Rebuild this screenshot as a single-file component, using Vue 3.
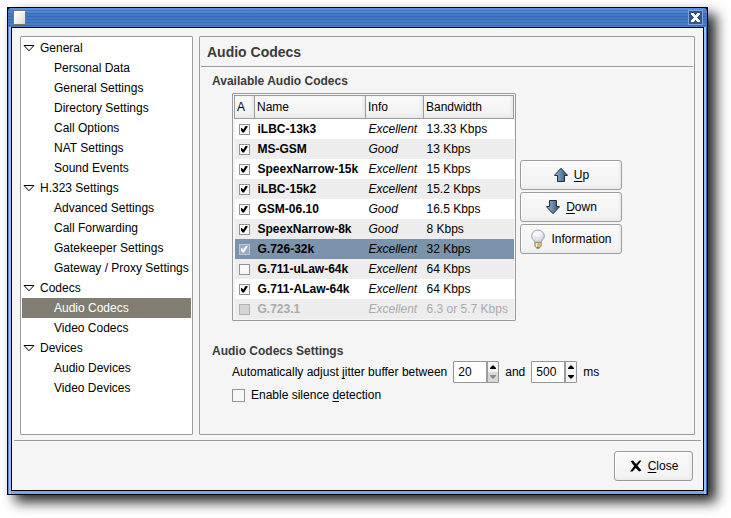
<script setup>
import { ref } from 'vue'

const tree = [
  { name: 'General', items: ['Personal Data', 'General Settings', 'Directory Settings', 'Call Options', 'NAT Settings', 'Sound Events'] },
  { name: 'H.323 Settings', items: ['Advanced Settings', 'Call Forwarding', 'Gatekeeper Settings', 'Gateway / Proxy Settings'] },
  { name: 'Codecs', items: ['Audio Codecs', 'Video Codecs'] },
  { name: 'Devices', items: ['Audio Devices', 'Video Devices'] },
]
const page = ref('Audio Codecs')
const selected = ref('G.726-32k')
const codecs = ref([
  { name: 'iLBC-13k3', info: 'Excellent', rate: '13.33 Kbps', on: true },
  { name: 'MS-GSM', info: 'Good', rate: '13 Kbps', on: true },
  { name: 'SpeexNarrow-15k', info: 'Excellent', rate: '15 Kbps', on: true },
  { name: 'iLBC-15k2', info: 'Excellent', rate: '15.2 Kbps', on: true },
  { name: 'GSM-06.10', info: 'Good', rate: '16.5 Kbps', on: true },
  { name: 'SpeexNarrow-8k', info: 'Good', rate: '8 Kbps', on: true },
  { name: 'G.726-32k', info: 'Excellent', rate: '32 Kbps', on: true },
  { name: 'G.711-uLaw-64k', info: 'Excellent', rate: '64 Kbps', on: false },
  { name: 'G.711-ALaw-64k', info: 'Excellent', rate: '64 Kbps', on: true },
  { name: 'G.723.1', info: 'Excellent', rate: '6.3 or 5.7 Kbps', on: false, off: true },
])
const minJitter = ref(20)
const maxJitter = ref(500)
const silence = ref(false)

function move(step) {
  const list = codecs.value
  const from = list.findIndex((c) => c.name === selected.value)
  const to = from + step
  if (to < 0 || to >= list.length) return
  list.splice(to, 0, list.splice(from, 1)[0])
}
</script>

<template>
  <div class="desktop">
    <div class="window">
      <header class="titlebar">
        <svg class="doc" width="13" height="15" viewBox="0 0 13 15" aria-hidden="true">
          <defs>
            <linearGradient id="paper" x1="0" y1="0" x2="1" y2="1">
              <stop offset="0" stop-color="#fff" />
              <stop offset=".5" stop-color="#f1f0ec" />
              <stop offset="1" stop-color="#d8d6cc" />
            </linearGradient>
          </defs>
          <path d="M.5 .5H11.500L12.500 1.500V14.500H.5Z" fill="url(#paper)" stroke="#77766e" />
          <path d="M1.500 13.500V1.500H11.500" fill="none" stroke="#fff" />
        </svg>
        <button class="shut" aria-label="Close window">
          <svg width="9" height="9" viewBox="0 0 9 9" aria-hidden="true">
            <path d="M0 0H3V1H4V2H5V1H6V0H9V2H8V3H7V4H6V5H7V6H8V7H9V9H6V8H5V7H4V8H3V9H0V7H1V6H2V5H3V4H2V3H1V2H0Z" fill="#fff" />
          </svg>
        </button>
      </header>

      <div class="body">
        <div class="panes">
          <nav class="tree">
            <template v-for="group in tree" :key="group.name">
              <a class="group" href="#">
                <svg width="12" height="7" viewBox="0 0 12 7" aria-hidden="true">
                  <path d="M1 .5H11L6 5.800Z" fill="#fff" stroke="#000" />
                </svg>
                <span>{{ group.name }}</span>
              </a>
              <a v-for="item in group.items" :key="item" class="leaf" :class="{ current: item === page }" href="#" @click.prevent="page = item">{{ item }}</a>
            </template>
          </nav>

          <main class="page">
            <h1>Audio Codecs</h1>
            <section>
              <h2>Available Audio Codecs</h2>
              <div class="codecs">
                <div class="frame">
                  <table>
                    <colgroup>
                      <col class="c-active" />
                      <col class="c-name" />
                      <col class="c-info" />
                      <col class="c-rate" />
                    </colgroup>
                    <thead>
                      <tr><th>A</th><th>Name</th><th>Info</th><th>Bandwidth</th></tr>
                    </thead>
                    <tbody>
                      <tr v-for="c in codecs" :key="c.name" :class="{ selected: c.name === selected, off: c.off }" @click="selected = c.name">
                        <td class="tick"><input v-model="c.on" type="checkbox" :disabled="c.off" :aria-label="c.name" /></td>
                        <td class="name">{{ c.name }}</td>
                        <td class="info">{{ c.info }}</td>
                        <td>{{ c.rate }}</td>
                      </tr>
                    </tbody>
                  </table>
                </div>
                <div class="actions">
                  <button class="btn" @click="move(-1)">
                    <svg width="16" height="16" viewBox="0 0 16 16" aria-hidden="true">
                      <defs>
                        <linearGradient id="steel">
                          <stop offset="0" stop-color="#9db9d2" />
                          <stop offset=".5" stop-color="#5f87aa" />
                          <stop offset="1" stop-color="#2f5274" />
                        </linearGradient>
                      </defs>
                      <path d="M8 1.300L14.300 8V8.500H11.500V14.500H4.500V8.500H1.700V8Z" fill="url(#steel)" stroke="#1d2c3a" />
                    </svg>
                    <span><u>U</u>p</span>
                  </button>
                  <button class="btn" @click="move(1)">
                    <svg width="16" height="16" viewBox="0 0 16 16" aria-hidden="true">
                      <path d="M8 14.700L14.300 8V7.500H11.500V1.500H4.500V7.500H1.700V8Z" fill="url(#steel)" stroke="#1d2c3a" />
                    </svg>
                    <span><u>D</u>own</span>
                  </button>
                  <button class="btn">
                    <svg width="16" height="20" viewBox="0 0 16 20" aria-hidden="true">
                      <defs>
                        <radialGradient id="glass" cx=".4" cy=".3" r=".7">
                          <stop offset="0" stop-color="#fff" />
                          <stop offset=".6" stop-color="#e9e9f6" />
                          <stop offset="1" stop-color="#bcbcce" />
                        </radialGradient>
                      </defs>
                      <path d="M8 1A6.300 6.300 0 0 0 1.600 7.300C1.600 10.300 4.600 11 4.900 13.500H11.100C11.400 11 14.400 10.300 14.400 7.300A6.300 6.300 0 0 0 8 1Z" fill="url(#glass)" stroke="#a3a3ad" />
                      <path d="M6 13L5.500 8L7 9L8 8L9 9L10.500 8L10 13" fill="none" stroke="#dedbd2" stroke-width=".7" />
                      <path d="M4.800 13.500H11.200V17L9.800 18.700H6.200L4.800 17Z" fill="#e3cd8c" stroke="#94845a" stroke-width=".8" />
                      <path d="M5.200 15.300H10.800M5.200 17H10.800" stroke="#b8a268" stroke-width=".6" />
                      <path d="M6.500 14V18" stroke="#f6ebc4" />
                      <path d="M6.500 19H9.500" stroke="#555" />
                    </svg>
                    <span>Information</span>
                  </button>
                </div>
              </div>
            </section>
            <section class="settings">
              <h2>Audio Codecs Settings</h2>
              <div class="jitter">
                <label for="jmin">Automatically adjust <u>j</u>itter buffer between</label>
                <div class="spin">
                  <input id="jmin" v-model.number="minJitter" type="text" />
                  <div class="steps">
                    <button aria-label="Increase minimum" @click="minJitter++"><svg width="6" height="4" viewBox="0 0 6 4"><path d="M0 4V3L3 0L6 3V4Z" /></svg></button>
                    <button aria-label="Decrease minimum" disabled><svg width="6" height="4" viewBox="0 0 6 4"><path d="M0 0V1L3 4L6 1V0Z" /></svg></button>
                  </div>
                </div>
                <label for="jmax">and</label>
                <div class="spin">
                  <input id="jmax" v-model.number="maxJitter" type="text" />
                  <div class="steps">
                    <button aria-label="Increase maximum" @click="maxJitter++"><svg width="6" height="4" viewBox="0 0 6 4"><path d="M0 4V3L3 0L6 3V4Z" /></svg></button>
                    <button aria-label="Decrease maximum" @click="maxJitter--"><svg width="6" height="4" viewBox="0 0 6 4"><path d="M0 0V1L3 4L6 1V0Z" /></svg></button>
                  </div>
                </div>
                <span>ms</span>
              </div>
              <label class="check"><input v-model="silence" type="checkbox" /><span>Enable silence <u>d</u>etection</span></label>
            </section>
          </main>
        </div>

        <footer class="foot">
          <button class="btn">
            <svg width="14" height="14" viewBox="0 0 14 14" aria-hidden="true">
              <path d="M1.500 2L4 1.500L7 5L10.500 1.500H12.500L8.500 6.800L12.500 11.500L10 12.500L6.800 9L3.500 12.500H1L5.200 7Z" fill="#000" />
            </svg>
            <span><u>C</u>lose</span>
          </button>
        </footer>
      </div>
    </div>
  </div>
</template>

<style>
body {
  background: #fff;
}
</style>

<style scoped>
* {
  box-sizing: border-box;
}
.desktop {
  display: flex;
  min-height: 100vh;
  padding: 7px 23px 23px 7px;
  font: 12px/20px "Liberation Sans", Arial, sans-serif;
  color: #000;
}
.window {
  flex: 1;
  display: flex;
  flex-direction: column;
  border: 1px solid #000;
  padding: 0 3px 3px;
  background: linear-gradient(#000, #000) 0 0 / 100% 4px no-repeat, linear-gradient(90deg, #5a8ed8 0 1px, #9fc0ee 1px 3px, #7ba6e4 3px calc(100% - 3px), #9fc0ee calc(100% - 3px) calc(100% - 1px), #3567ae calc(100% - 1px));
  box-shadow: 8px 7px 12px 0 rgba(0, 0, 0, 0.85);
}
.titlebar {
  display: flex;
  align-items: center;
  justify-content: space-between;
  height: 19px;
  margin: 0 -3px;
  padding: 0 4px 0 5px;
  border-radius: 3px 3px 0 0;
  background: repeating-linear-gradient(rgba(20, 50, 110, 0) 0 2px, rgba(20, 50, 110, 0.22) 2px 3px), linear-gradient(#5b93dc, #4078c4 40%, #4a7fc6);
}
.shut {
  display: flex;
  align-items: center;
  justify-content: center;
  width: 15px;
  height: 15px;
  padding: 0;
  border: 1px solid #7fa6dc;
  background: #35568c;
}
.body {
  flex: 1;
  display: flex;
  flex-direction: column;
  border: 1px solid #000;
  padding: 8px 2px 9px;
  background: #f5f5f5;
}
.panes {
  flex: 1;
  display: flex;
  gap: 6px;
  padding: 0 6px 5px;
}
.tree,
.page {
  border: 1px solid #9c9c9c;
  border-radius: 1px;
}
.tree {
  flex: 0 0 173px;
  padding: 1px;
  background: #fff;
}
.tree a {
  display: flex;
  align-items: center;
  gap: 5px;
  height: 20px;
  color: #000;
  text-decoration: none;
  white-space: nowrap;
}
.tree .group {
  padding-left: 1px;
}
.tree .leaf {
  padding-left: 32px;
}
.tree .current {
  background: #817d73;
  color: #fff;
}
.page {
  flex: 1;
  padding: 0 1px;
}
h1,
h2 {
  margin: 0;
  color: #3b3b3b;
}
h1 {
  height: 30px;
  padding-left: 6px;
  border-bottom: 1px solid #9c9c9c;
  font-size: 14px;
  line-height: 30px;
}
section {
  padding: 4px 11px 0;
}
h2 {
  font-size: 12px;
  line-height: 20px;
}
.codecs {
  display: flex;
  align-items: center;
  gap: 4px;
  padding: 2px 0 0 20px;
}
.frame {
  flex: 0 0 284px;
  border: 1px solid #9c9c9c;
  border-radius: 1px;
  padding: 1px;
  background: #f5f5f5;
}
table {
  width: 100%;
  border-collapse: collapse;
  table-layout: fixed;
}
.c-active {
  width: 20px;
}
.c-name {
  width: 111px;
}
.c-info {
  width: 58px;
}
th {
  height: 23px;
  padding: 0 2px;
  border: 1px solid #9c9c9c;
  background: linear-gradient(#fafafa, #f0f0f0);
  box-shadow: inset -2px -2px 3px #e8e8e8;
  font-weight: 400;
  text-align: left;
}
td {
  height: 20px;
  padding: 0 0 0 3px;
  line-height: 20px;
  white-space: nowrap;
}
td.tick {
  padding-left: 4px;
}
tbody tr {
  background: #fff;
}
tbody tr:nth-child(even) {
  background: #ededed;
}
tbody tr.selected {
  background: #7b94ac;
}
.name {
  font-weight: 700;
}
.info {
  font-style: italic;
}
.off {
  color: #ababab;
}
input[type="checkbox"] {
  appearance: none;
  display: block;
  width: 11px;
  height: 11px;
  margin: 0;
  border: 1px solid #949494;
  background: #f8f8f8;
}
input[type="checkbox"]:checked::after {
  content: "";
  display: block;
  width: 7px;
  height: 7px;
  margin: 1px;
  background: #000;
  clip-path: polygon(0 40%, 20% 36%, 38% 60%, 78% 0, 100% 0, 100% 20%, 50% 100%, 30% 100%, 0 60%);
}
.selected input[type="checkbox"] {
  border-color: #bac7dc;
  background: #9aaac4;
}
.selected input[type="checkbox"]:checked::after {
  background: #fff;
}
.off input[type="checkbox"] {
  border-color: #b0b0b0;
  background: #d4d4d4;
}
.actions {
  display: flex;
  flex-direction: column;
  gap: 2px;
  width: 102px;
}
.btn {
  display: flex;
  align-items: center;
  justify-content: center;
  gap: 5px;
  height: 30px;
  padding: 0;
  border: 1px solid #9c9c9c;
  border-radius: 3px;
  background: linear-gradient(#f9f9f9, #f2f2f2);
  box-shadow: inset -2px -2px 3px #ebebeb, inset 1px 1px 0 #fff;
  color: #000;
  font: inherit;
}
u {
  text-underline-offset: 2px;
}
.settings {
  padding-top: 20px;
}
.jitter {
  display: flex;
  align-items: center;
  gap: 6px;
  padding-left: 20px;
  white-space: nowrap;
}
.spin {
  display: flex;
  height: 22px;
  border: 1px solid #949494;
  border-radius: 1px;
}
.spin input {
  width: 32px;
  padding: 0 4px;
  border: 0;
  background: #fff;
  color: #000;
  font: inherit;
}
.steps {
  display: flex;
  flex-direction: column;
  width: 12px;
  border-left: 2px solid #9c9c9c;
}
.steps button {
  flex: 1;
  display: flex;
  align-items: center;
  justify-content: center;
  padding: 0;
  border: 0;
  background: #f5f5f5;
  color: #000;
}
.steps button:disabled {
  background: #d8d8d8;
  color: #888;
}
.steps path {
  fill: currentColor;
}
.check {
  display: flex;
  align-items: center;
  gap: 6px;
  margin-left: 20px;
  padding-top: 2px;
}
.check input[type="checkbox"] {
  width: 13px;
  height: 13px;
}
.foot {
  display: flex;
  justify-content: flex-end;
  padding: 10px 8px 0;
  border-top: 1px solid #9c9c9c;
}
.foot .btn {
  width: 79px;
}
</style>
